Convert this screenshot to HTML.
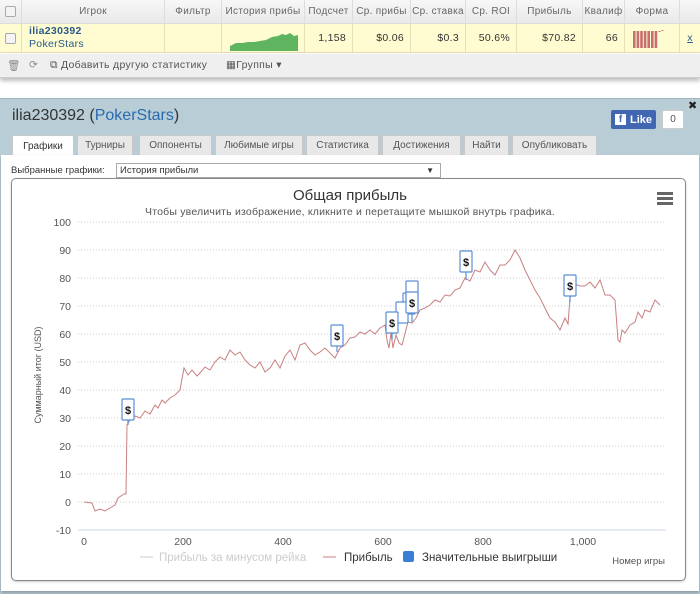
<!DOCTYPE html>
<html><head><meta charset="utf-8"><style>
*{box-sizing:border-box;margin:0;padding:0}
body{width:700px;height:594px;background:#fff;font-family:"Liberation Sans","DejaVu Sans",sans-serif;position:relative;overflow:hidden}
.a{position:absolute}
.hd{top:0;left:0;width:700px;height:24px;background:linear-gradient(#f7f7f7,#e9e9e9);border-bottom:1px solid #ddd}
.row{top:24px;left:0;width:700px;height:29px;background:#fffcd2;border-bottom:1px solid #e0ddb0}
.c{position:absolute;top:0;height:100%;border-right:1px solid #ddd;font-size:10px;color:#666;letter-spacing:.3px;display:flex;align-items:center;justify-content:center;white-space:nowrap;overflow:hidden}
.row .c{border-right:1px solid #e6e2b8;color:#333;justify-content:flex-end;padding-right:6px;font-size:10.5px}
.cb{width:11px;height:11px;border:1px solid #aaa;border-radius:2px;background:#f4f4f4}
.tb{top:54px;left:0;width:700px;height:24px;background:#efefef;border-bottom:1px solid #ccc;box-shadow:0 3px 4px rgba(0,0,0,.25);font-size:10.5px;color:#555;letter-spacing:.3px}
.panel{top:98px;left:0;width:700px;height:496px;background:#b8cdd6;border-top:1px solid #9fb5bf}
.tab{position:absolute;top:135px;height:20px;background:#e8e8e8;border:1px solid #c8c8c8;border-bottom:none;font-size:10px;color:#555;display:flex;align-items:center;justify-content:center;border-radius:2px 2px 0 0}
</style></head><body>
<div class="a hd">
<div class="c" style="left:0;width:22px"><div class="cb"></div></div>
<div class="c" style="left:22px;width:143px">Игрок</div>
<div class="c" style="left:165px;width:57px">Фильтр</div>
<div class="c" style="left:222px;width:83px">История прибы</div>
<div class="c" style="left:305px;width:48px">Подсчет</div>
<div class="c" style="left:353px;width:58px">Ср. прибы</div>
<div class="c" style="left:411px;width:55px">Ср. ставка</div>
<div class="c" style="left:466px;width:51px">Ср. ROI</div>
<div class="c" style="left:517px;width:66px">Прибыль</div>
<div class="c" style="left:583px;width:42px">Квалиф</div>
<div class="c" style="left:625px;width:55px">Форма</div>
</div>
<div class="a row">
<div class="c" style="left:0;width:22px;justify-content:center;padding:0"><div class="cb"></div></div>
<div class="c" style="left:22px;width:143px;flex-direction:column;align-items:flex-start;justify-content:center;padding-left:7px;line-height:13px"><b style="color:#2a5a8a">ilia230392</b><span style="color:#2a5a8a">PokerStars</span></div>
<div class="c" style="left:165px;width:57px"></div>
<div class="c" style="left:222px;width:83px;padding:0"><svg width="83" height="29"><path d="M8 27 L8 22 L14 19 L20 19 L26 18 L32 18 L38 17 L44 16 L50 13 L56 12 L60 10 L64 11 L68 9 L72 12 L76 11 L76 27 Z" fill="#5fb55f"/></svg></div>
<div class="c" style="left:305px;width:48px">1,158</div>
<div class="c" style="left:353px;width:58px">$0.06</div>
<div class="c" style="left:411px;width:55px">$0.3</div>
<div class="c" style="left:466px;width:51px">50.6%</div>
<div class="c" style="left:517px;width:66px">$70.82</div>
<div class="c" style="left:583px;width:42px">66</div>
<div class="c" style="left:625px;width:55px;justify-content:flex-start;padding-left:8px"><svg width="40" height="22"><g fill="#c86f6f"><rect x="0" y="4" width="2.6" height="17"/><rect x="3.6" y="4" width="2.6" height="17"/><rect x="7.2" y="4" width="2.6" height="17"/><rect x="10.8" y="4" width="2.6" height="17"/><rect x="14.4" y="4" width="2.6" height="17"/><rect x="18" y="4" width="2.6" height="17"/><rect x="21.6" y="4" width="2.6" height="17"/><rect x="25.5" y="4" width="2" height="1"/><rect x="28.5" y="3" width="2" height="1"/></g></svg></div>
<div class="c" style="left:680px;width:20px;border:none;justify-content:center;padding:0;color:#2a5a8a;text-decoration:underline">x</div>
</div>
<div class="a tb">
<span class="a" style="left:7px;top:5px;color:#888">🗑</span>
<span class="a" style="left:29px;top:5px;color:#888">⟳</span>
<span class="a" style="left:50px;top:5px">⧉ Добавить другую статистику</span>
<span class="a" style="left:226px;top:5px">▦Группы ▾</span>
</div>
<div class="a panel"></div>
<div class="a" style="left:12px;top:107px;font-size:16px;color:#333">ilia230392 (<span style="color:#2a6ab0">PokerStars</span>)</div>
<div class="a" style="left:611px;top:110px;width:45px;height:19px;background:#4267b2;border-radius:2px;color:#fff;font-size:11px;font-weight:bold;display:flex;align-items:center;padding-left:4px"><span style="background:#fff;color:#4267b2;width:11px;height:11px;display:inline-block;text-align:center;font-size:10px;line-height:12px;margin-right:4px">f</span>Like</div>
<div class="a" style="left:662px;top:110px;width:22px;height:19px;background:#fff;border:1px solid #ccc;border-radius:2px;font-size:10px;color:#555;text-align:center;line-height:17px">0</div>
<div class="a" style="left:688px;top:99px;font-size:11px;font-weight:bold;color:#222">✖</div>
<div class="tab" style="left:12px;width:62px;background:#fff;height:21px;color:#333">Графики</div>
<div class="tab" style="left:77px;width:56px">Турниры</div>
<div class="tab" style="left:139px;width:73px">Оппоненты</div>
<div class="tab" style="left:215px;width:88px">Любимые игры</div>
<div class="tab" style="left:306px;width:73px">Статистика</div>
<div class="tab" style="left:382px;width:79px">Достижения</div>
<div class="tab" style="left:464px;width:45px">Найти</div>
<div class="tab" style="left:512px;width:85px">Опубликовать</div>
<div class="a" style="left:1px;top:155px;width:698px;height:436px;background:#fff;box-shadow:0 2px 3px rgba(0,0,0,.25)"></div>
<div class="a" style="left:11px;top:165px;font-size:9.5px;color:#333">Выбранные графики:</div>
<div class="a" style="left:116px;top:163px;width:325px;height:15px;border:1px solid #aaa;font-size:9.5px;color:#333;padding-left:3px;line-height:13px">История прибыли<span style="position:absolute;right:6px;font-size:8px">▼</span></div>
<div class="a" style="left:11px;top:178px;width:675px;height:403px;border:1px solid #888;border-radius:5px;box-shadow:0 1px 2px rgba(0,0,0,.2)"></div>
<div class="a" style="left:0;top:187px;width:700px;text-align:center;font-size:15px;color:#333">Общая прибыль</div>
<div class="a" style="left:0;top:206px;width:700px;text-align:center;font-size:10.5px;color:#555;letter-spacing:.2px">Чтобы увеличить изображение, кликните и перетащите мышкой внутрь графика.</div>
<div class="a" style="left:657px;top:192px;width:16px"><div style="height:3px;background:#666;margin-bottom:2px"></div><div style="height:3px;background:#666;margin-bottom:2px"></div><div style="height:3px;background:#666"></div></div>
<svg class="a" style="left:0;top:0" width="700" height="594" font-family="Liberation Sans,DejaVu Sans,sans-serif">
<g stroke="#ccc" stroke-dasharray="1,2" stroke-width="1">
<line x1="78" x2="666" y1="222" y2="222"/><line x1="78" x2="666" y1="250" y2="250"/><line x1="78" x2="666" y1="278" y2="278"/><line x1="78" x2="666" y1="306" y2="306"/><line x1="78" x2="666" y1="334" y2="334"/><line x1="78" x2="666" y1="362" y2="362"/><line x1="78" x2="666" y1="390" y2="390"/><line x1="78" x2="666" y1="418" y2="418"/><line x1="78" x2="666" y1="446" y2="446"/><line x1="78" x2="666" y1="474" y2="474"/><line x1="78" x2="666" y1="502" y2="502"/>
</g>
<line x1="78" x2="666" y1="530" y2="530" stroke="#ccd6eb"/>
<g font-size="10.5" fill="#555" text-anchor="end">
<text x="71" y="226">100</text><text x="71" y="254">90</text><text x="71" y="282">80</text><text x="71" y="310">70</text><text x="71" y="338">60</text><text x="71" y="366">50</text><text x="71" y="394">40</text><text x="71" y="422">30</text><text x="71" y="450">20</text><text x="71" y="478">10</text><text x="71" y="506">0</text><text x="71" y="534">-10</text>
</g>
<g font-size="10.5" fill="#555" text-anchor="middle">
<text x="84" y="545">0</text><text x="183" y="545">200</text><text x="283" y="545">400</text><text x="383" y="545">600</text><text x="483" y="545">800</text><text x="583" y="545">1,000</text>
</g>
<text transform="translate(41,375) rotate(-90)" font-size="9" fill="#555" text-anchor="middle">Суммарный итог (USD)</text>
<polyline fill="none" stroke="#c98080" stroke-width="1" points="84,502 92,503 95,511 100,509 105,511 110,508 115,505 118,498 124,494 126,494 127,425 130,420 135,416 140,418 145,411 150,414 155,405 158,408 162,400 165,403 170,398 175,395 180,390 184,368 188,375 192,370 197,376 200,373 205,367 210,370 215,362 220,357 225,360 230,350 235,355 240,352 245,360 250,365 255,368 260,362 265,372 270,368 275,360 280,368 285,356 290,350 295,360 300,345 305,343 310,350 315,355 320,352 325,348 335,358 340,348 345,345 350,338 355,337 360,332 365,334 370,330 375,334 380,328 385,325 387,340 389,348 391,333 393,348 396,335 399,343 402,345 408,322 412,323 416,318 420,310 425,308 430,305 435,300 440,302 445,295 450,296 455,290 460,288 465,278 470,281 475,270 480,272 485,262 490,270 495,275 500,265 505,265 510,260 515,250 520,258 525,270 530,280 535,290 540,298 545,308 550,318 555,322 560,330 565,318 568,324 570,298 575,284 580,286 585,286 590,282 595,288 600,280 605,295 610,295 615,300 618,340 620,342 622,330 625,333 630,325 635,322 638,312 642,318 645,310 650,312 655,300 660,305"/>
<g fill="#fff" stroke="#5a8fd8" stroke-width="1.2" font-size="11" font-weight="bold">
<g><line x1="128" y1="420" x2="128" y2="425"/><rect x="122" y="399" width="12" height="21" rx="1"/></g>
<g><line x1="337" y1="346" x2="337" y2="352"/><rect x="331" y="325" width="12" height="21" rx="1"/></g>
<g><rect x="403" y="293" width="12" height="21" rx="1"/></g>
<g><rect x="396" y="302" width="12" height="21" rx="1"/></g>
<g><line x1="392" y1="333" x2="392" y2="340"/><rect x="386" y="312" width="12" height="21" rx="1"/></g>
<g><rect x="406" y="281" width="12" height="21" rx="1"/></g>
<g><line x1="412" y1="314" x2="412" y2="322"/><rect x="406" y="292" width="12" height="21" rx="1"/></g>
<g><line x1="466" y1="272" x2="466" y2="280"/><rect x="460" y="251" width="12" height="21" rx="1"/></g>
<g><line x1="570" y1="296" x2="570" y2="302"/><rect x="564" y="275" width="12" height="21" rx="1"/></g>
</g>
<g font-size="11" font-weight="bold" fill="#111" text-anchor="middle">
<text x="128" y="414">$</text><text x="337" y="340">$</text><text x="392" y="327">$</text><text x="412" y="307">$</text><text x="466" y="266">$</text><text x="570" y="290">$</text>
</g>
<line x1="140" x2="153" y1="557" y2="557" stroke="#ccc"/>
<text x="159" y="561" font-size="11.5" fill="#ccc">Прибыль за минусом рейка</text>
<line x1="323" x2="336" y1="557" y2="557" stroke="#c98080"/>
<text x="344" y="561" font-size="11.5" fill="#333">Прибыль</text>
<rect x="403" y="551" width="11" height="11" rx="2" fill="#3a7fd5"/>
<text x="422" y="561" font-size="11.5" fill="#333">Значительные выигрыши</text>
<text x="665" y="564" font-size="9.5" fill="#555" text-anchor="end">Номер игры</text>
</svg>
</body></html>
